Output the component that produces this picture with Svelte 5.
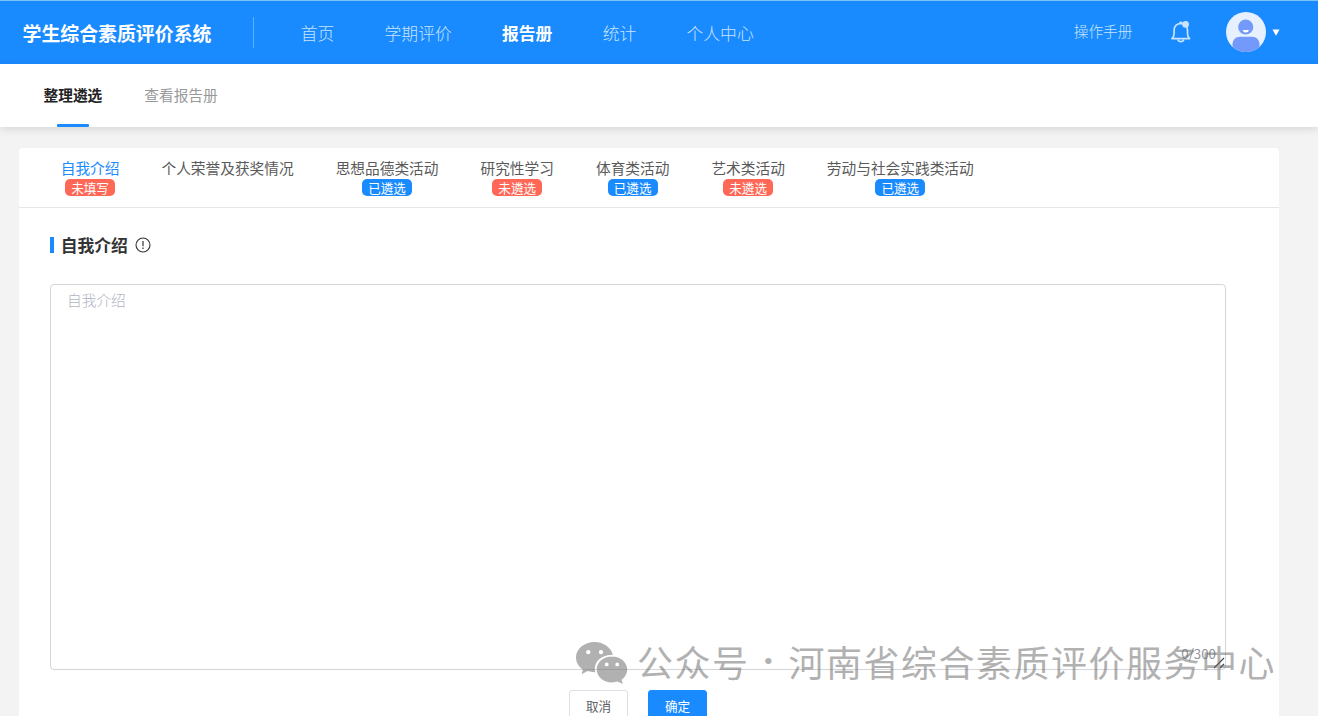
<script lang="ts">
    type Tab = { label: string; status?: string; done?: boolean };

    const navItems = ['首页', '学期评价', '报告册', '统计', '个人中心'];
    const subItems = ['整理遴选', '查看报告册'];
    const tabs: Tab[] = [
        { label: '自我介绍', status: '未填写' },
        { label: '个人荣誉及获奖情况' },
        { label: '思想品德类活动', status: '已遴选', done: true },
        { label: '研究性学习', status: '未遴选' },
        { label: '体育类活动', status: '已遴选', done: true },
        { label: '艺术类活动', status: '未遴选' },
        { label: '劳动与社会实践类活动', status: '已遴选', done: true }
    ];
    const maxLength = 300;

    let activeNav = $state('报告册');
    let activeSub = $state('整理遴选');
    let activeTab = $state('自我介绍');
    let content = $state('');
</script>

<div class="page">
    <header class="header">
        <div class="logo">学生综合素质评价系统</div>
        <div class="divider"></div>
        <nav class="nav">
            {#each navItems as item}
                <button class="nav-item" class:active={item === activeNav} onclick={() => (activeNav = item)}>{item}</button>
            {/each}
        </nav>
        <div class="manual">操作手册</div>
        <svg class="bell" viewBox="0 0 22 24" width="22" height="24">
            <path d="M2 18.600h17.600c-1.500-1.300-2.100-2.800-2.100-5V10c0-3.800-2.700-6.300-6.700-6.300S4.100 6.200 4.100 10v3.600c0 2.200-.6 3.700-2.100 5z" fill="none" stroke="currentColor" stroke-width="1.700" stroke-linejoin="round"/>
            <path d="M7.800 19.500c.5 1.500 1.600 2.200 3 2.200s2.500-.7 3-2.200" fill="none" stroke="currentColor" stroke-width="1.700"/>
            <path d="M9 3.500c0-1.300.7-1.900 1.800-1.900s1.800.6 1.800 1.900z" fill="currentColor"/>
            <circle cx="15.600" cy="4.400" r="3.300" fill="currentColor"/>
        </svg>
        <svg class="avatar" viewBox="0 0 40 40" width="40" height="40">
            <clipPath id="avatar-clip"><circle cx="20" cy="20" r="20"/></clipPath>
            <g clip-path="url(#avatar-clip)">
                <rect width="40" height="40" fill="#e6f0ff"/>
                <circle cx="19.7" cy="15" r="7.6" fill="#7399fb"/>
                <path d="M16.700 18h6.200c-.4 1.700-1.500 2.500-3.100 2.500s-2.700-.8-3.100-2.500z" fill="#fff"/>
                <path d="M6.500 40v-7.500c0-4.500 3-7.800 7.500-7.800h12c4.500 0 7.500 3.300 7.500 7.800V40z" fill="#7399fb"/>
            </g>
        </svg>
        <svg class="caret" viewBox="0 0 8 7" width="8" height="7"><path d="M.5.500h7L4 6.800z" fill="#fff"/></svg>
    </header>

    <div class="sub-nav">
        {#each subItems as item}
            <button class="sub-item" class:active={item === activeSub} onclick={() => (activeSub = item)}>{item}</button>
        {/each}
    </div>

    <main class="card">
        <div class="tabs">
            {#each tabs as tab}
                <button class="tab" class:active={tab.label === activeTab} onclick={() => (activeTab = tab.label)}>
                    <span class="tab-label">{tab.label}</span>
                    {#if tab.status}
                        <span class="badge" class:done={tab.done}>{tab.status}</span>
                    {/if}
                </button>
            {/each}
        </div>

        <div class="section-title">
            <span>{activeTab}</span>
            <svg viewBox="0 0 16 16" width="16" height="16">
                <circle cx="8" cy="8" r="7" fill="none" stroke="#333" stroke-width="1.1"/>
                <path d="M8 4v5.200M8 10.600v1.300" stroke="#333" stroke-width="1.2"/>
            </svg>
        </div>

        <div class="editor">
            <textarea bind:value={content} placeholder="自我介绍" maxlength={maxLength}></textarea>
            <span class="count">{content.length}/{maxLength}</span>
            <svg class="grip" viewBox="0 0 12 12" width="12" height="12">
                <path d="M1 11L11 1M7 11l4-4" stroke="#444" stroke-width="1.2"/>
            </svg>
        </div>

        <div class="actions">
            <button class="btn">取消</button>
            <button class="btn primary">确定</button>
        </div>
    </main>

    <div class="watermark">
        <svg viewBox="0 0 52 42" width="52" height="42">
            <path fill-rule="evenodd" d="M18.500 0C8.300 0 0 6.900 0 15.500c0 4.900 2.700 9.200 6.900 12L5.600 32.300l6-3.200c2.100.7 4.500 1.100 6.900 1.100h.8C17 19.800 25.500 12.500 36.800 13 35.300 5.600 27.700 0 18.500 0zM12.300 7.900a2.200 2.200 0 1 1 0 4.400 2.200 2.200 0 0 1 0-4.400zM25 7.900a2.200 2.200 0 1 1 0 4.400 2.200 2.200 0 0 1 0-4.400z"/>
            <path fill-rule="evenodd" d="M36 14.500c-8.500 0-15.300 5.800-15.300 13S27.500 40.400 36 40.400c2 0 3.900-.3 5.600-.8l5.200 2.400-1.200-4.300c3.400-2.400 5.600-6 5.600-10.200 0-7.200-6.800-13-15.200-13zM30.700 20.500a1.900 1.900 0 1 1 0 3.800 1.900 1.900 0 0 1 0-3.800zM41.200 20.500a1.900 1.900 0 1 1 0 3.800 1.900 1.900 0 0 1 0-3.800z"/>
        </svg>
        <span class="channel">公众号</span>
        <span class="dot">·</span>
        <span>河南省综合素质评价服务中心</span>
    </div>
</div>

<style>
    :global(body) {
        background: #fff;
        overflow: hidden;
    }

    .page {
        position: relative;
        display: flex;
        flex-direction: column;
        height: 716px;
        overflow: hidden;
        background: #f3f3f3;
        font-family: "Noto Sans CJK SC", sans-serif;
        font-size: 14.7px;
        color: #333;
    }

    button {
        padding: 0;
        border: none;
        background: none;
        font: inherit;
        color: inherit;
        white-space: nowrap;
        cursor: pointer;
    }

    .header {
        box-sizing: border-box;
        flex: none;
        display: flex;
        align-items: center;
        height: 64px;
        padding: 0 38px 0 22.5px;
        border-top: 1px solid #7cc3f8;
        background: #1a8aff;
        color: #c6e4ff;
    }

    .logo {
        width: 230.5px;
        margin-bottom: 1px;
        font-size: 18.9px;
        font-weight: 700;
        color: #fff;
        white-space: nowrap;
    }

    .divider {
        width: 1px;
        height: 31px;
        margin-right: 46.7px;
        background: #5eafff;
    }

    .nav {
        display: flex;
        gap: 50.3px;
        font-size: 16.8px;
        font-weight: 300;
    }

    .nav-item.active {
        color: #fff;
        font-weight: 700;
    }

    .manual {
        margin: 0 37px 4px auto;
        font-weight: 300;
    }

    .bell {
        margin-right: 34px;
        margin-bottom: 1px;
    }

    .avatar {
        margin-right: 6.5px;
        margin-bottom: 1px;
    }

    .sub-nav {
        flex: none;
        display: flex;
        gap: 42px;
        height: 63px;
        padding-left: 43.5px;
        background: #fff;
        box-shadow: 0 2px 8px rgba(0, 0, 0, 0.12);
    }

    .sub-item {
        position: relative;
        padding-bottom: 2px;
        color: #999;
    }

    .sub-item.active {
        color: #222;
        font-weight: 700;
    }

    .sub-item.active::after {
        content: "";
        position: absolute;
        bottom: 0;
        left: 50%;
        width: 32px;
        height: 3px;
        margin-left: -16px;
        border-radius: 1px;
        background: #1a8aff;
    }

    .card {
        flex: 1;
        min-height: 0;
        margin: 21px 39px 0 19px;
        border-radius: 4px 4px 0 0;
        background: #fff;
    }

    .tabs {
        box-sizing: border-box;
        display: flex;
        gap: 42px;
        height: 60px;
        padding: 9px 0 0 41.7px;
        border-bottom: 1px solid #e6e6e6;
    }

    .tab {
        display: flex;
        flex-direction: column;
        align-items: center;
        color: #5a5a5a;
    }

    .tab-label {
        height: 22px;
        line-height: 21px;
    }

    .tab.active {
        color: #1a8aff;
    }

    .badge {
        width: 50px;
        height: 17px;
        border-radius: 5px;
        background: #ff6857;
        color: #fff;
        font-size: 12.6px;
        line-height: 17px;
        text-align: center;
    }

    .badge.done {
        background: #1a8aff;
    }

    .section-title {
        display: flex;
        align-items: center;
        gap: 6.7px;
        height: 24px;
        margin: 25px 0 0 31px;
        font-size: 16.8px;
        font-weight: 700;
    }

    .section-title::before {
        content: "";
        width: 4px;
        height: 16px;
        background: #1a8aff;
    }

    .editor {
        position: relative;
        width: 1176px;
        height: 386px;
        margin: 27px 0 0 31px;
    }

    textarea {
        display: block;
        box-sizing: border-box;
        width: 100%;
        height: 100%;
        padding: 4px 16px;
        border: 1px solid #d3d5da;
        border-radius: 4px;
        outline: none;
        background: #fff;
        resize: none;
        font: 300 14.7px/22px "Noto Sans CJK SC", sans-serif;
    }

    textarea::placeholder {
        color: #b0b4be;
    }

    .count {
        position: absolute;
        right: 10px;
        bottom: 6px;
        color: #909399;
        font-size: 13.3px;
        line-height: 20px;
    }

    .grip {
        position: absolute;
        right: 1px;
        bottom: 1px;
    }

    .actions {
        display: flex;
        gap: 20px;
        margin: 20px 0 0 550px;
    }

    .btn {
        box-sizing: border-box;
        width: 59px;
        height: 33px;
        padding-bottom: 2px;
        border: 1px solid #dcdfe6;
        border-radius: 3px;
        background: #fff;
        color: #606266;
        font-size: 12.6px;
    }

    .btn.primary {
        border-color: #1a8aff;
        background: #1a8aff;
        color: #fff;
    }

    .watermark {
        position: absolute;
        left: 576px;
        top: 642px;
        display: flex;
        align-items: center;
        height: 42px;
        color: #666;
        fill: #666;
        opacity: 0.5;
        font-size: 36px;
        line-height: 42px;
        letter-spacing: 1.5px;
        white-space: nowrap;
        pointer-events: none;
    }

    .watermark span {
        padding-bottom: 5px;
    }

    .channel {
        margin-left: 9px;
    }

    .dot {
        width: 39px;
        font-family: "Noto Sans", sans-serif;
        font-weight: 700;
        text-align: center;
    }
</style>
